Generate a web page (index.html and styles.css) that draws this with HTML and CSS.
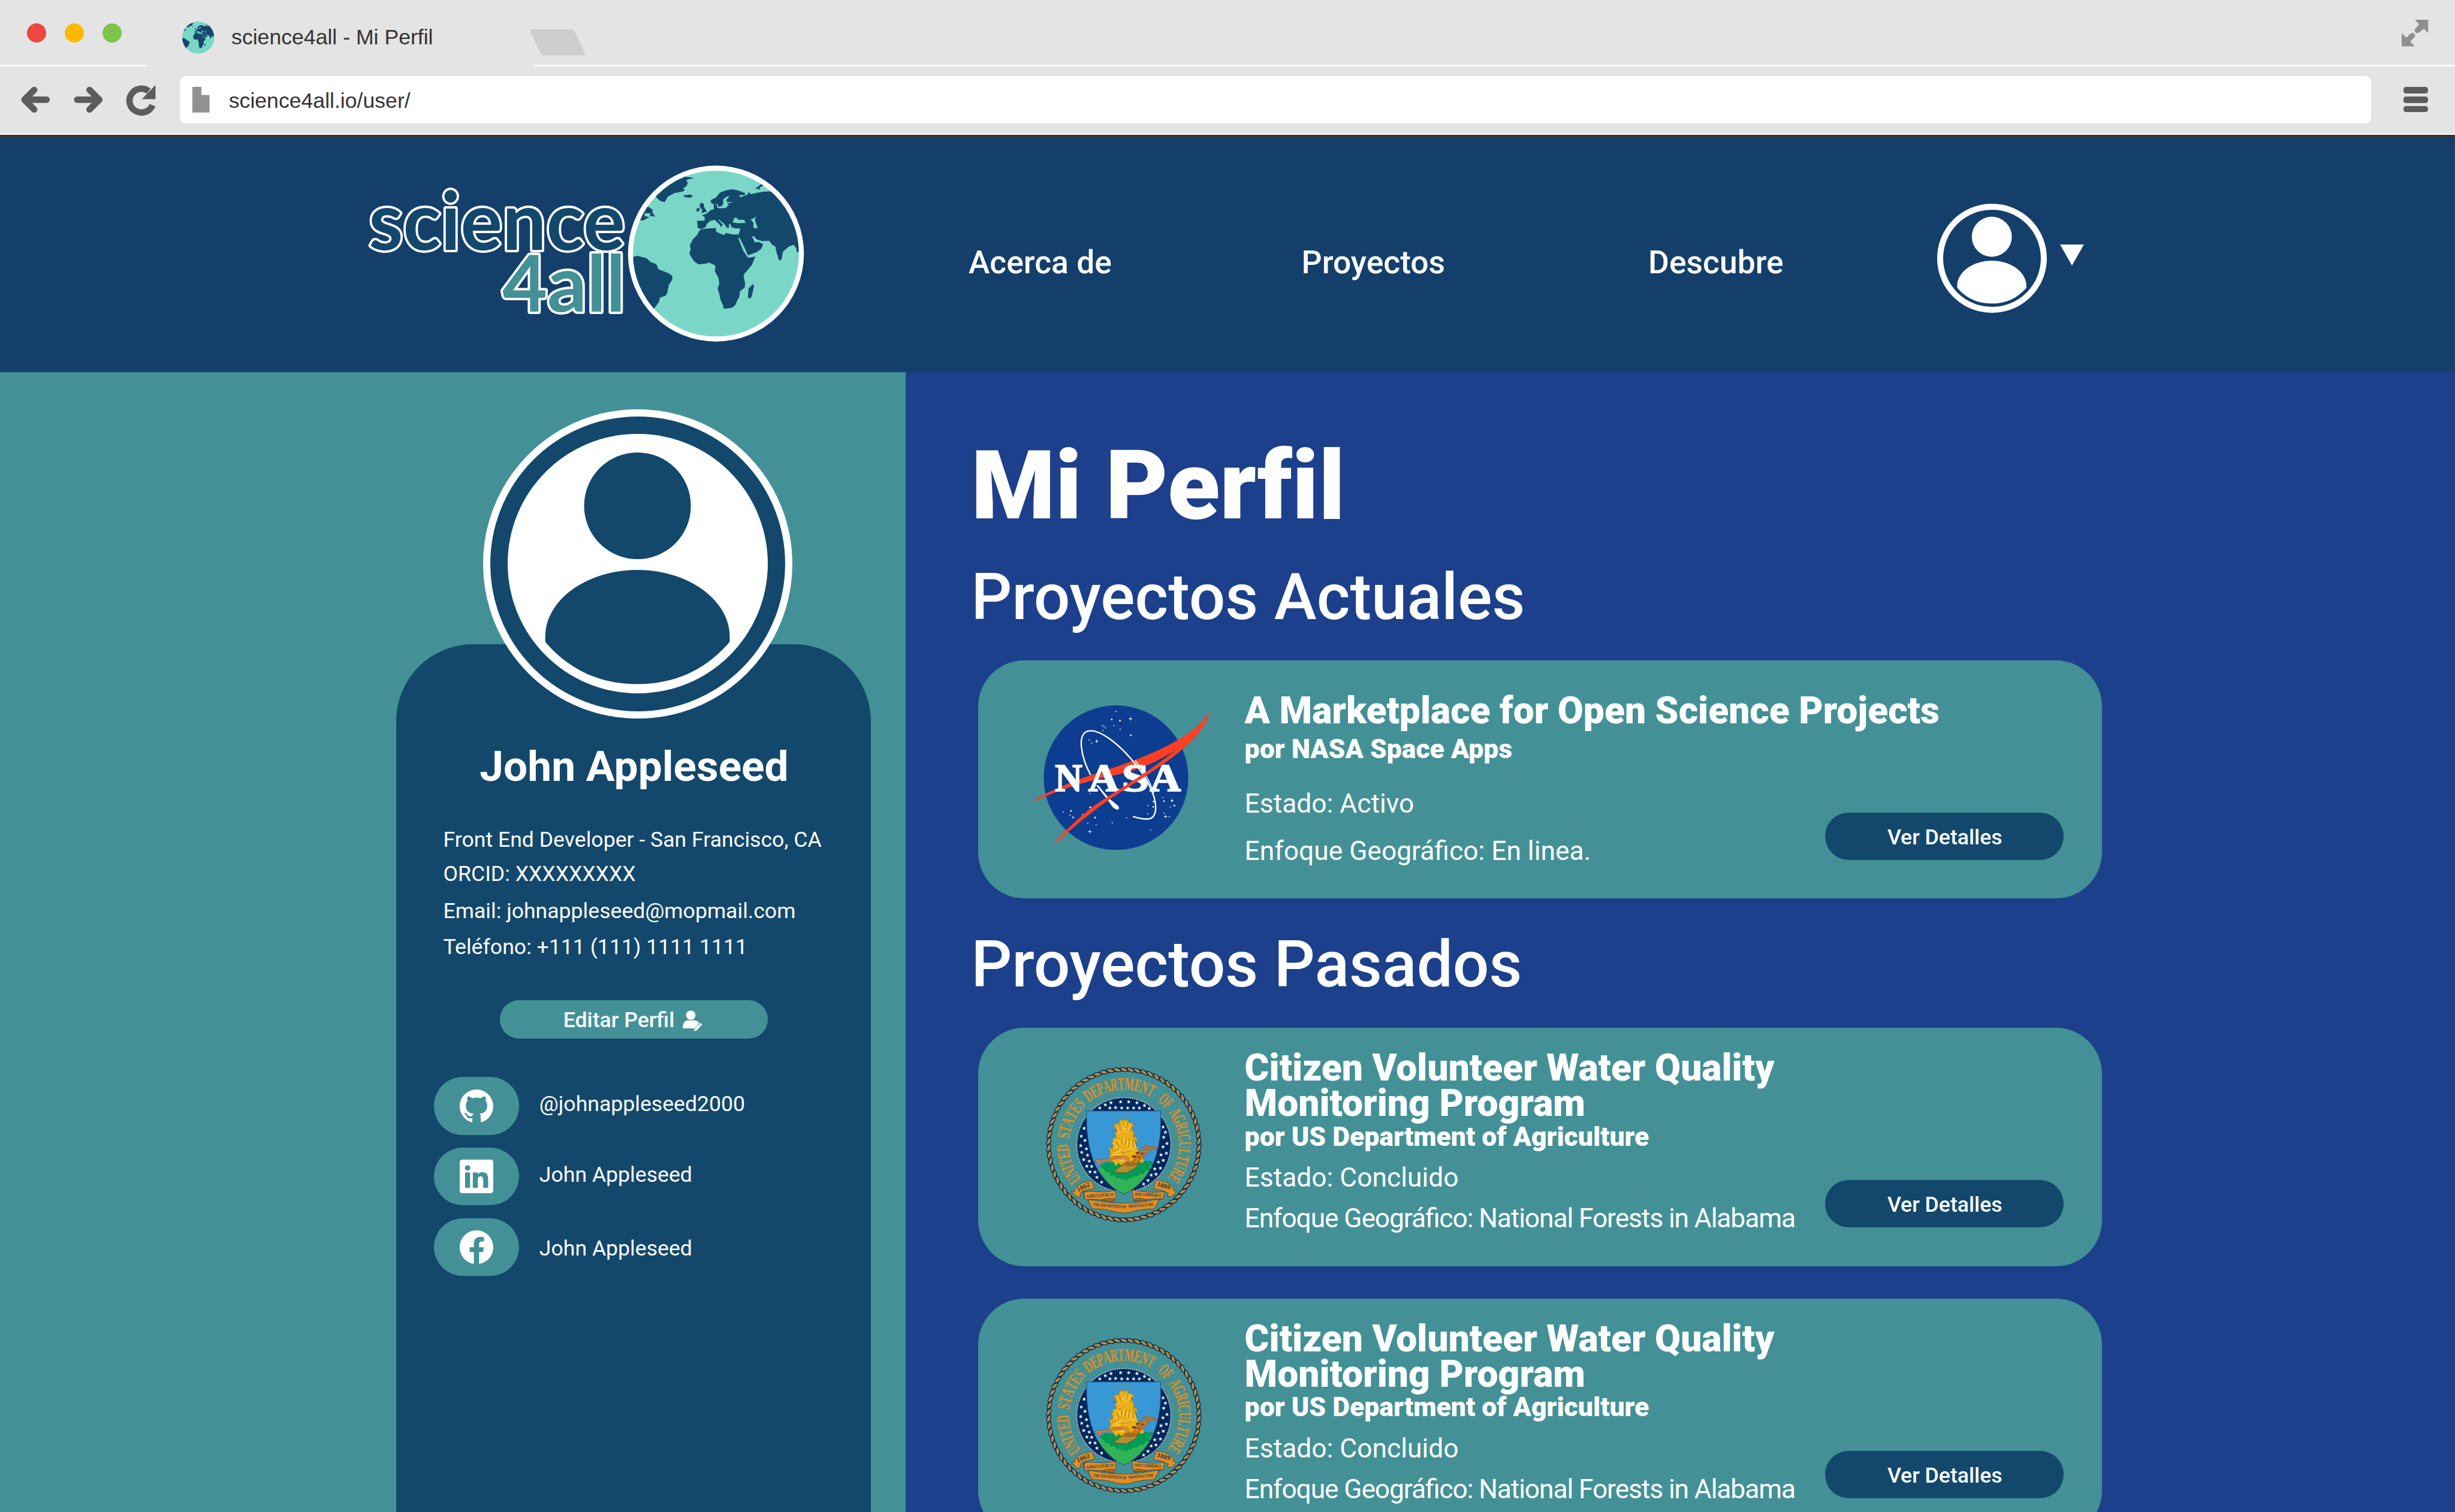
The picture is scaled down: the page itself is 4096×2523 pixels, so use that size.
FILE: index.html
```html
<!DOCTYPE html>
<html lang="es">
<head>
<meta charset="utf-8">
<title>science4all - Mi Perfil</title>
<link rel="stylesheet" href="styles.css">
</head>
<body>
<svg class="defs" aria-hidden="true">
  <defs>
    <clipPath id="globe-clip"><circle cx="648" cy="640" r="583"/></clipPath>
    <clipPath id="shield-clip"><path d="M375 395H894C901 560 886 660 835 780C790 870 715 950 636 978C560 950 480 865 435 775C385 660 370 540 375 395Z"/></clipPath>
  </defs>
  <symbol id="globe" viewBox="65 57 1166 1166">
    <circle cx="648" cy="640" r="583" fill="#7ad7c7"/>
    <g clip-path="url(#globe-clip)" fill="#13486c">
      <path d="M545 470L530 480L515 510L490 535L478 555L465 580L470 610L462 640L475 665L495 695L525 715L570 712L605 703L615 712L635 718L645 730L640 765L655 790L665 810L672 850L660 885L672 925L680 965L697 1000L703 1027L735 1025L765 1018L785 1000L800 965L812 945L817 905L850 880L853 850L842 800L850 780L880 745L900 720L925 660L875 670L860 650L840 620L805 535L805 505L770 507L718 495L705 510L680 500L650 487L648 460L600 463Z"/>
      <path d="M515 410L568 408L570 385L550 370L585 358L610 335L634 328L632 300L640 290L655 297L655 315L670 322L715 320L740 297L724 288L770 278L724 276L722 262L745 235L722 240L698 260L700 285L690 305L668 312L655 290L625 292L612 280L612 265L650 245L675 212L720 195L760 188L800 195L855 215L850 228L810 230L820 245L870 225L878 208L895 222L940 212L985 205L1035 203L1300 260L1240 628L1215 628L1212 600L1195 578L1160 590L1118 628L1112 670L1102 690L1090 685L1075 635L1065 590L1045 580L1022 550L975 552L935 540L915 517L902 520L922 562L950 558L980 575L965 608L935 630L872 652L850 600L815 530L800 535L808 505L820 465L770 460L755 450L748 430L738 435L742 455L728 462L705 430L660 395L672 412L697 438L690 445L685 458L678 440L652 415L640 403L610 410L585 430L575 455L548 468L520 460Z"/>
      <path d="M435 100L495 108L440 122L450 145L442 165L415 185L430 190L420 203L355 215L310 240L288 278L255 270L225 240L200 200L300 90Z"/>
      <path d="M415 232L450 228L470 225L485 237L465 248L435 245Z"/>
      <path d="M170 310L205 332L200 350L222 380L182 375L190 358L150 355L145 375L180 385L135 408L90 400L130 330Z"/>
      <path d="M535 290L550 283L565 295L562 310L585 345L545 355L552 335L535 310Z"/>
      <path d="M512 325L535 317L532 340L512 347Z"/>
      <path d="M50 668L95 655L160 672L190 700L228 713L245 750L315 778L342 797L340 825L318 860L305 920L295 935L255 950L248 980L215 1025L100 1030L0 700Z"/>
      <path d="M908 853L915 870L902 930L892 955L872 950L878 885Z"/>
      <path d="M925 182L970 150L980 160L952 180L962 192Z"/>
      <g fill="#7ad7c7">
        <path d="M765 420L778 388L800 390L800 403L845 403L858 425L800 427Z"/>
        <path d="M893 400L935 381L920 400L930 430L940 455L932 465L910 455L912 425Z"/>
      </g>
    </g>
  </symbol>
  <symbol id="person" viewBox="-304 -304 608 608">
    <circle cy="-135.5" r="125"/>
    <path d="M-216 171C-216 85 -119 14.500 0 14.500S216 85 216 171C216 182 217 183 211 189C155 251 85 282 0 282S-155 251 -211 189C-217 183 -216 182 -216 171Z"/>
  </symbol>
</svg>

<div class="tabstrip">
  <div class="lights"><i class="light red"></i><i class="light amber"></i><i class="light green"></i></div>
  <svg class="favicon"><use href="#globe"/></svg>
  <span class="tab-title">science4all - Mi Perfil</span>
  <svg class="new-tab" viewBox="0 0 128 61"><path fill="#cdcdcd" d="M4 0H95Q102 0 105 8L127 55Q129 61 123 61H34Q26 61 23 54L1 8Q-2 0 4 0Z"/></svg>
  <svg class="expand" viewBox="0 0 62 62"><path fill="#8f8f8f" d="M31 0H62V31L52 21L41 30Q36 33 32 29Q29 25 32 21L41 11ZM0 31L11 42L20 33Q25 29 30 33Q33 37 30 41L20 51L31 62H0Z"/></svg>
</div>
<div class="toolbar">
  <svg class="nav-icon back" viewBox="0 0 68 60"><path d="M60 30H12M31 7L8 30L31 53"/></svg>
  <svg class="nav-icon forward" viewBox="0 0 68 60"><path d="M8 30H56M37 7L60 30L37 53"/></svg>
  <svg class="nav-icon reload" viewBox="0 0 68 70"><path d="M61 47A28 28 0 1 1 52 14"/><path class="solid" d="M68 0V33H36Z"/></svg>
  <div class="address">
    <svg class="page-icon" viewBox="0 0 40 60"><path fill="#919191" d="M0 0H21V19H40V60H0Z"/></svg>
    <span>science4all.io/user/</span>
  </div>
  <div class="menu-icon"><i></i><i></i><i></i></div>
</div>

<header class="site-header">
  <svg class="logo" viewBox="850 350 1050 490">
    <g class="logo-text">
      <text x="863" y="584" font-size="188" fill="#13486c" textLength="600" lengthAdjust="spacingAndGlyphs">science</text>
      <text x="1176" y="729" font-size="182" fill="#439196" textLength="288" lengthAdjust="spacingAndGlyphs">4all</text>
    </g>
    <circle cx="1676" cy="593" r="206" fill="#fff"/>
    <use href="#globe" x="1481.700" y="398.700" width="388.600" height="388.600"/>
  </svg>
  <nav class="main-nav">
    <a>Acerca de</a><a>Proyectos</a><a>Descubre</a>
  </nav>
  <div class="user-menu">
    <svg class="user-avatar"><use href="#person"/></svg>
    <svg class="caret" viewBox="0 0 56 49"><path fill="#fff" d="M0 0H56L28 49Z"/></svg>
  </div>
</header>

<div class="page">
  <aside class="sidebar">
    <div class="portrait"><svg class="portrait-disc"><use href="#person"/></svg></div>
    <section class="profile">
      <h2 class="name">John Appleseed</h2>
      <ul class="facts">
        <li>Front End Developer - San Francisco, CA</li>
        <li>ORCID: XXXXXXXXX</li>
        <li>Email: johnappleseed@mopmail.com</li>
        <li>Teléfono: +111 (111) 1111 1111</li>
      </ul>
      <a class="edit">Editar Perfil
        <svg class="edit-icon" viewBox="177 83 138 148"><circle cx="234" cy="117" r="33"/><path d="M177 209C177 168 195 154 218 152Q234 158 252 152C272 153 285 160 292 170L262 209Z"/><path class="pencil" d="M254 232L257 212L300 168L316 183L273 227Z"/><path class="cut" d="M287 178L305 196M257 212L273 227"/></svg>
      </a>
      <ul class="social">
        <li><span class="pill"><svg viewBox="0 0 16 16"><path d="M8 0C3.58 0 0 3.58 0 8c0 3.54 2.29 6.53 5.47 7.59.4.07.55-.17.55-.38 0-.19-.01-.82-.01-1.49-2.01.37-2.53-.49-2.69-.94-.09-.23-.48-.94-.82-1.13-.28-.15-.68-.52-.01-.53.63-.01 1.08.58 1.23.82.72 1.21 1.87.87 2.33.66.07-.52.28-.87.51-1.07-1.78-.2-3.64-.89-3.64-3.95 0-.87.31-1.59.82-2.15-.08-.2-.36-1.02.08-2.12 0 0 .67-.21 2.2.82.64-.18 1.32-.27 2-.27s1.36.09 2 .27c1.53-1.04 2.2-.82 2.2-.82.44 1.1.16 1.92.08 2.12.51.56.82 1.27.82 2.15 0 3.07-1.87 3.75-3.65 3.95.29.25.54.73.54 1.48 0 1.07-.01 1.93-.01 2.2 0 .21.15.46.55.38A8.01 8.01 0 0 0 16 8c0-4.42-3.58-8-8-8"/></svg></span><span class="handle">@johnappleseed2000</span></li>
        <li><span class="pill"><svg viewBox="0 0 16 16"><path d="M0 1.146C0 .513.526 0 1.175 0h13.65C15.474 0 16 .513 16 1.146v13.708c0 .633-.526 1.146-1.175 1.146H1.175C.526 16 0 15.487 0 14.854zm4.943 12.248V6.169H2.542v7.225zm-1.2-8.212c.837 0 1.358-.554 1.358-1.248-.015-.709-.52-1.248-1.342-1.248S2.4 3.226 2.4 3.934c0 .694.521 1.248 1.327 1.248zm4.908 8.212V9.359c0-.216.016-.432.08-.586.173-.431.568-.878 1.232-.878.869 0 1.216.662 1.216 1.634v3.865h2.401V9.25c0-2.22-1.184-3.252-2.764-3.252-1.274 0-1.845.7-2.165 1.193v.025h-.016l.016-.025V6.169h-2.4c.03.678 0 7.225 0 7.225z"/></svg></span><span class="handle">John Appleseed</span></li>
        <li><span class="pill"><svg viewBox="0 0 16 16"><path d="M16 8.049c0-4.446-3.582-8.05-8-8.05C3.58 0-.002 3.603-.002 8.05c0 4.017 2.926 7.347 6.75 7.951v-5.625h-2.03V8.05H6.75V6.275c0-2.017 1.195-3.131 3.022-3.131.876 0 1.791.157 1.791.157v1.98h-1.009c-.993 0-1.303.621-1.303 1.258v1.51h2.218l-.354 2.326H9.25V16c3.824-.604 6.75-3.934 6.75-7.951"/></svg></span><span class="handle low">John Appleseed</span></li>
      </ul>
    </section>
  </aside>

  <main class="content">
    <h1>Mi Perfil</h1>
    <h2 class="section-title">Proyectos Actuales</h2>
    <article class="project roomy">
      <div class="emblem">
        <svg class="nasa" viewBox="0 0 1380 1200">
          <circle cx="640" cy="601" r="508" fill="#0c3d91"/>
          <path fill="#ff3f23" d="M65 758C200 680 330 625 600 538C850 455 1170 330 1303 140C1270 240 1190 330 1100 405L1055 412C900 500 800 550 600 590C400 635 230 690 75 765Z"/>
          <path fill="none" stroke="#fff" stroke-width="10" d="M462 582C400 470 350 271 462 271C610 271 920 620 919 810C917 895 880 910 758 873"/>
          <path fill="#fff" d="M498 652L515 655L590 745L655 798Q667 815 655 825Q635 828 615 805L572 745Z"/>
          <g class="nasa-letters">
            <text x="212" y="693" textLength="192" lengthAdjust="spacingAndGlyphs">N</text>
            <text x="445" y="693" textLength="216" lengthAdjust="spacingAndGlyphs">A</text>
            <text x="680" y="693" textLength="192" lengthAdjust="spacingAndGlyphs">S</text>
            <text x="878" y="693" textLength="218" lengthAdjust="spacingAndGlyphs">A</text>
          </g>
          <path fill="none" stroke="#fff" stroke-width="7" d="M775 480C840 560 890 650 905 710"/>
          <path fill="#ff3f23" d="M1303 140C1270 240 1190 330 1100 405C1040 460 960 515 840 595C700 685 560 770 440 870C360 935 280 1000 210 1065L210 1050C290 970 380 880 470 808C580 735 700 660 840 568C920 515 990 460 1055 412Z"/>
          <g id="nasa-stars" fill="#fff"></g>
        </svg>
      </div>
      <div class="details">
        <h3>A Marketplace for Open Science Projects</h3>
        <h4>por NASA Space Apps</h4>
        <p class="state">Estado: Activo</p>
        <p class="focus">Enfoque Geográfico: En linea.</p>
      </div>
      <a class="more">Ver Detalles</a>
    </article>

    <h2 class="section-title past">Proyectos Pasados</h2>
    <article class="project">
      <div class="emblem">
        <svg class="usda" viewBox="0 0 1260 1260">
          <g id="seal">
            <g id="seal-rope"></g>
            <g id="seal-letters" class="seal-letters"></g>
            <circle cx="636" cy="632" r="330" fill="#00285d"/>
            <g id="seal-stars" fill="#fff"></g>
            <g clip-path="url(#shield-clip)">
              <path fill="#3898d6" d="M370 390H900V980H370Z"/>
              <path fill="#30b457" d="M430 806L500 790L560 770H800L860 745V980H400Z"/>
              <path fill="#009b55" d="M470 790L500 755L640 765L790 745L845 752L835 775L812 790L822 808L790 815L775 835L745 838L735 855L700 856L690 872L665 870L655 890L640 872L620 880L610 862L585 868L570 846L540 850L535 826L505 825L500 806Z"/>
            </g>
            <path fill="none" stroke="#1b4a80" stroke-width="4" d="M375 395H894C901 560 886 660 835 780C790 870 715 950 636 978C560 950 480 865 435 775C385 660 370 540 375 395Z"/>
            <g stroke-linecap="round" stroke-linejoin="round">
              <path fill="none" stroke="#8d8a4a" stroke-width="3" stroke-dasharray="7 5" d="M612 470C605 440 600 430 585 425M622 465C622 430 610 412 618 404M635 465C640 430 630 415 655 404M648 465C655 430 670 415 690 412M655 468C670 445 685 435 700 440M610 475C595 460 590 450 583 462M690 480C715 490 722 510 728 535"/>
              <path fill="#ecb012" stroke="#8c6d16" stroke-width="2" d="M568 488L600 486L612 452L626 466L634 446L645 464L662 452L665 474L690 478L712 506L688 506L700 540L712 560L700 570L722 580L735 608L718 602L722 645L740 680L748 705L770 720L778 752L760 762L735 745L720 775L690 765L615 775L600 760L580 782L560 748L528 742L545 690L528 650L556 662L560 630L545 628L562 605L556 590L585 582L574 550L588 540L570 510Z"/>
              <path fill="none" stroke="#ffc55a" stroke-width="9" d="M590 510L602 550M625 490L630 520M650 485L645 530M612 580L650 560L668 535M600 600L615 635M640 590L630 635M665 600L655 640M690 610L680 650M708 625L722 655M575 690L620 665M640 680L700 662M560 705L610 700M685 500L670 520M580 640L590 660M610 745L640 735"/>
              <path fill="none" stroke="#7c5f12" stroke-width="3" d="M578 500L592 540M606 486L612 530M634 478L630 500M662 480L650 515M600 590L632 570L668 545M588 612L600 650M622 600L620 640M650 592L644 640M676 590L670 645M700 600L706 650M560 680L600 660M620 690L690 672M555 712L600 712M695 500L680 540M728 640L700 560M545 655L556 670M555 545L585 520"/>
              <path fill="none" stroke="#804312" stroke-width="17" d="M440 748C520 750 560 718 630 720M464 752L468 772M700 755L775 660Q795 632 815 650M722 762L808 672Q835 640 860 660M700 715L750 718M728 690L765 692"/>
              <path fill="none" stroke="#d5803c" stroke-width="13" d="M442 748C520 750 560 718 630 720M464 752L466 770"/>
              <path fill="none" stroke="#cf7620" stroke-width="12" d="M700 755L775 660Q795 632 815 650M722 762L808 672Q835 640 860 660M745 712L760 714M765 680L790 682"/>
              <path fill="#d98444" stroke="#804312" stroke-width="2" d="M610 716C650 700 678 720 680 755L658 756C654 732 640 728 610 732Z"/>
              <path fill="#b58a35" stroke="#6b4a15" stroke-width="3" d="M562 822L602 792L645 757Q715 745 732 784L700 805L655 830Z"/>
              <path fill="#a36c18" d="M645 758Q715 748 728 780Q680 790 625 776Z"/>
            </g>
            <g stroke="#1c3557" stroke-width="3" stroke-linejoin="round">
              <path fill="#b06c0e" d="M268 962L330 975L320 1003L285 975ZM1005 960L945 975L955 998L985 975ZM350 960L400 965L380 1015L358 1010ZM920 955L880 1020L915 1010Z"/>
              <path fill="#e58e1c" d="M290 940Q340 888 412 886L430 940Q365 945 335 968Q325 985 335 992L312 1004L268 962L292 958Z"/>
              <path fill="#e58e1c" d="M862 880Q940 885 984 935L982 952L1006 960L970 998L942 994L948 972Q900 945 846 942Z"/>
              <path fill="#e58e1c" d="M356 968Q380 955 430 962Q500 970 576 954L580 1005L560 1035Q470 1010 362 1018Z"/>
              <path fill="#e58e1c" d="M695 948Q800 975 920 962L915 1012Q800 1010 712 1030L700 1000Z"/>
              <path fill="#b06c0e" d="M383 1022L425 1030L415 1080ZM880 1022L850 1030L850 1080ZM480 1020Q530 1005 570 1010L560 1035ZM705 1028L720 1008Q770 1008 800 1022Z"/>
              <path fill="#e58e1c" d="M400 1018Q640 1070 868 1016L880 1026L850 1082Q740 1085 700 1102Q640 1122 560 1100Q500 1082 415 1082L385 1024Z"/>
            </g>
            <g class="seal-ribbon">
              <text font-size="44" textLength="96" lengthAdjust="spacingAndGlyphs" transform="translate(312 962) rotate(-24)">1862</text>
              <text font-size="44" textLength="96" lengthAdjust="spacingAndGlyphs" transform="translate(866 920) rotate(17)">1889</text>
              <text font-size="31" textLength="192" lengthAdjust="spacingAndGlyphs" transform="translate(371 1005) rotate(-4)">AGRICULTURE IS</text>
              <text font-size="31" textLength="188" lengthAdjust="spacingAndGlyphs" transform="translate(711 989) rotate(3)">AND COMMERCE</text>
              <text font-size="31" textLength="234" lengthAdjust="spacingAndGlyphs" transform="translate(421 1062) rotate(4.500)">THE FOUNDATION OF</text>
              <text font-size="31" textLength="176" lengthAdjust="spacingAndGlyphs" transform="translate(669 1076) rotate(-5)">MANUFACTURE</text>
            </g>
          </g>
        </svg>
      </div>
      <div class="details">
        <h3>Citizen Volunteer Water Quality<br>Monitoring Program</h3>
        <h4>por US Department of Agriculture</h4>
        <p class="state">Estado: Concluido</p>
        <p class="focus tight">Enfoque Geográfico: National Forests in Alabama</p>
      </div>
      <a class="more">Ver Detalles</a>
    </article>
    <article class="project">
      <div class="emblem"><svg class="usda" viewBox="0 0 1260 1260"><use href="#seal"/></svg></div>
      <div class="details">
        <h3>Citizen Volunteer Water Quality<br>Monitoring Program</h3>
        <h4>por US Department of Agriculture</h4>
        <p class="state">Estado: Concluido</p>
        <p class="focus tight">Enfoque Geográfico: National Forests in Alabama</p>
      </div>
      <a class="more">Ver Detalles</a>
    </article>
  </main>
</div>
<script src="emblems.js"></script>
</body>
</html>
```
FILE: styles.css
```css
/* the layout grid is 57.49rem wide, whatever the window */
html { font-size: calc(100vw / 57.49); }
* { box-sizing: border-box; }
body {
  margin: 0;
  height: 100vh;
  overflow: hidden;
  display: flex;
  flex-direction: column;
  font-family: Roboto, sans-serif;
  color: #fff;
}
h1, h2, h3, h4, p, ul { margin: 0; padding: 0; font-weight: 400; }
ul { list-style: none; }
svg { display: block; flex: none; overflow: visible; }
.defs { position: absolute; width: 0; height: 0; overflow: hidden; }

/* browser window */
.tabstrip, .toolbar {
  display: flex;
  flex: none;
  background: #e4e4e4;
  color: #353334;
  font: .5rem/.5rem "Liberation Sans", Arial, sans-serif;
}
.tabstrip { height: 1.52rem; }
.lights { display: flex; gap: .435rem; width: 2.22rem; margin: .55rem 0 0 .63rem; }
.light { width: .45rem; height: .45rem; border-radius: 50%; }
.red { background: #ee4640; }
.amber { background: #ffba00; }
.green { background: #7ec44a; }
.favicon { width: .75rem; height: .75rem; margin: .5rem 0 0 1.42rem; }
.tab-title { width: 7rem; margin: .63rem 0 0 .4rem; white-space: nowrap; }
.new-tab { width: 1.28rem; height: .61rem; margin-top: .69rem; }
.expand { width: .62rem; height: .62rem; margin: .47rem .63rem 0 auto; }

.toolbar {
  height: 1.7rem;
  padding-top: .26rem;
  border-bottom: .06rem solid #353334;
  background:
    linear-gradient(#fff, #fff) 0 0 / 3.45rem .04rem no-repeat,
    linear-gradient(#fff, #fff) 12.52rem 0 / 45rem .04rem no-repeat,
    linear-gradient(#fff, #fff) 0 1.61rem / 100% .03rem no-repeat,
    #e4e4e4;
}
.nav-icon { fill: none; stroke: #5c5c5c; stroke-width: 15; stroke-linecap: round; stroke-linejoin: round; }
.nav-icon .solid { fill: #5c5c5c; stroke: none; }
.back { width: .68rem; height: .6rem; margin: .26rem 0 0 .49rem; }
.forward { width: .68rem; height: .6rem; margin: .26rem 0 0 .56rem; }
.reload { width: .68rem; height: .7rem; margin: .21rem 0 0 .55rem; stroke-linecap: butt; }
.address {
  display: flex;
  width: 51.31rem;
  height: 1.105rem;
  margin-left: .57rem;
  padding: .26rem 0 0 .29rem;
  border-radius: .14rem;
  background: #fff;
}
.page-icon { width: .4rem; height: .6rem; }
.address span { margin-left: .46rem; padding-top: .075rem; }
.menu-icon { display: flex; flex-direction: column; gap: .07rem; margin: .26rem 0 0 .76rem; }
.menu-icon i { width: .58rem; height: .15rem; border-radius: .06rem; background: #5c5c5c; }

/* site header */
.site-header { display: flex; flex: none; height: 5.49rem; background: #153f6b; }
.logo { width: 10.5rem; height: 4.9rem; margin: .285rem 0 0 8.5rem; }
.logo-text {
  font-family: Lato, sans-serif;
  font-weight: 700;
  stroke: #fff;
  stroke-width: 11;
  stroke-linejoin: round;
  paint-order: stroke;
}
.main-nav {
  display: grid;
  grid-template-columns: 7.8rem 8.12rem 6.77rem;
  margin: 2.545rem 0 0 3.68rem;
  font-size: .75rem;
  line-height: .75rem;
  font-weight: 500;
}
.user-menu { display: flex; margin-top: 1.55rem; gap: .31rem; }
.user-avatar {
  width: 2.56rem;
  height: 2.56rem;
  border: .152rem solid #fff;
  border-radius: 50%;
  fill: #fff;
}
.caret { width: .56rem; height: .49rem; margin-top: .96rem; }

/* page columns */
.page { display: flex; flex: 1; min-height: 0; }
.sidebar {
  display: flex;
  flex-direction: column;
  width: 21.21rem;
  padding: .87rem 0 0 9.28rem;
  background: #439196;
}
.portrait {
  z-index: 1;
  flex: none;
  display: grid;
  place-items: center;
  width: 7.25rem;
  height: 7.25rem;
  margin-left: 2.03rem;
  border: .18rem solid #fff;
  border-radius: 50%;
  background: #13486c;
}
.portrait-disc { width: 6.08rem; height: 6.08rem; border-radius: 50%; background: #fff; fill: #13486c; }
.profile {
  display: flex;
  flex-direction: column;
  flex: 1 0 auto;
  width: 11.12rem;
  margin-top: -1.745rem;
  padding-top: 2.355rem;
  border-radius: 1.8rem 1.8rem 0 0;
  background: #13486c;
}
.name { padding-left: .02rem; font-size: 1rem; line-height: 1rem; font-weight: 700; text-align: center; }
.facts { padding: .985rem 0 0 1.1rem; font-size: .5rem; line-height: .5rem; white-space: nowrap; }
.facts li:nth-child(2) { margin-top: .3rem; }
.facts li:nth-child(3) { margin-top: .375rem; }
.facts li:nth-child(4) { margin-top: .34rem; }
.edit {
  display: flex;
  align-items: center;
  gap: .19rem;
  width: 6.28rem;
  height: .9rem;
  margin: .99rem 0 0 2.42rem;
  padding: .05rem 0 0 1.49rem;
  border-radius: .45rem;
  background: #439196;
  font-size: .5rem;
  line-height: .5rem;
  font-weight: 500;
}
.edit-icon { width: .46rem; height: .493rem; fill: #fff; }
.pencil { stroke: #439196; stroke-width: 4; }
.cut { stroke: #439196; stroke-width: 3; }
.social { display: grid; gap: .3rem; padding: .9rem 0 0 .88rem; font-size: .5rem; line-height: .5rem; }
.social li { display: flex; align-items: center; gap: .47rem; height: 1.35rem; }
.pill { display: grid; place-items: center; width: 2rem; height: 1.35rem; border-radius: .675rem; background: #439196; }
.pill svg { width: .786rem; height: .786rem; fill: #fff; }
.handle { padding-bottom: .07rem; }
.handle.low { padding: .09rem 0 0; }

.content { flex: 1; padding: 1.535rem 0 0 1.53rem; background: #1d408c; overflow: hidden; }
h1 { font-size: 2.25rem; line-height: 2.26rem; font-weight: 900; font-variant-ligatures: none; }
.section-title { margin-top: .74rem; font-size: 1.5rem; line-height: 1.5rem; font-weight: 500; }
.section-title.past { margin-top: .807rem; }
.project {
  display: flex;
  width: 26.31rem;
  height: 5.58rem;
  margin: .72rem 0 0 .172rem;
  border-radius: 1.08rem;
  background: #439196;
}
.project + .project { margin-top: .76rem; }
.emblem { flex: none; width: 6.235rem; }
.nasa { width: 4.6rem; height: 4rem; margin: .74rem 0 0 1.09rem; }
.usda { width: 4.2rem; height: 4.2rem; margin: .63rem 0 0 1.29rem; }
.details { flex: 1; width: 0; padding-top: .54rem; font-size: .6225rem; line-height: .6rem; white-space: nowrap; }
.details h3 { font-size: .875rem; line-height: .822rem; font-weight: 900; }
.details h4 { margin-top: .07rem; font-size: .625rem; font-weight: 900; line-height: .6rem; }
.state { margin-top: .36rem; }
.focus { margin-top: .358rem; }
.tight { letter-spacing: -.0155rem; font-feature-settings: "liga" 1; }
.roomy .details { padding-top: .775rem; }
.roomy h4 { margin-top: .182rem; }
.roomy .state { margin-top: .68rem; }
.roomy .focus { margin-top: .506rem; }
.more {
  flex: none;
  display: grid;
  place-items: center;
  align-self: flex-end;
  width: 5.59rem;
  height: 1.11rem;
  margin: 0 .9rem .905rem 0;
  padding: .06rem 0 0 .03rem;
  border-radius: .55rem;
  background: #13486c;
  font-size: .5rem;
  line-height: .5rem;
  font-weight: 500;
}

/* emblem lettering */
.nasa-letters { font: 700 280px "Liberation Serif", serif; fill: #fff; stroke: #fff; stroke-width: 9; }
.seal-letters { font: 700 125px "Liberation Serif", serif; fill: #e58e1c; text-anchor: middle; }
.seal-ribbon { font-family: "Liberation Serif", serif; font-weight: 700; fill: #1c3557; }
```
FILE: emblems.js
```js
const NS = "http://www.w3.org/2000/svg";
function add(parent, tag, attrs, text) {
  const el = document.createElementNS(NS, tag);
  for (const k in attrs) el.setAttribute(k, attrs[k]);
  if (text) el.textContent = text;
  parent.appendChild(el);
}
const CX = 636, CY = 632;

// twisted rope border
const rope = document.getElementById("seal-rope");
add(rope, "circle", { cx: CX, cy: CY, r: 528, fill: "none", stroke: "#00285d", "stroke-width": 26 });
const strands = 70;
for (const pass of [["#00285d", 30, 15], ["#b98a38", 24, 9.5]]) {
  for (let i = 0; i < strands; i++) {
    add(rope, "ellipse", {
      rx: pass[1], ry: pass[2], fill: pass[0],
      transform: `translate(${CX} ${CY}) rotate(${i * 360 / strands}) translate(0 -528) rotate(22)`
    });
  }
}

// circular lettering: [word, start angle, end angle], measured clockwise from nine o'clock
const advance = { U: 722, N: 722, I: 389, T: 667, E: 667, D: 722, S: 556, A: 722, P: 611, R: 722, M: 944, O: 778, F: 611, G: 778, C: 722, L: 667 };
const letters = document.getElementById("seal-letters");
for (const [word, from, to] of [["UNITED", -38.5, 0.5], ["STATES", 6, 46], ["DEPARTMENT", 50.5, 120], ["OF", 127.5, 140], ["AGRICULTURE", 144.5, 217]]) {
  const total = [...word].reduce((s, c) => s + advance[c], 0);
  const squeeze = (to - from) * Math.PI / 180 * 415 / (total * 0.125);
  let pos = 0;
  for (const c of word) {
    const angle = from + (to - from) * (pos + advance[c] / 2) / total - 90;
    add(letters, "text", {
      transform: `translate(${CX} ${CY}) rotate(${angle.toFixed(2)}) translate(0 -386) scale(${squeeze.toFixed(3)} 1)`
    }, c);
    pos += advance[c];
  }
}

// beads and stars on the inner disc
const stars = document.getElementById("seal-stars");
for (let i = 0; i < 136; i++) {
  const a = i * Math.PI * 2 / 136;
  add(stars, "circle", { cx: (CX + 331 * Math.cos(a)).toFixed(1), cy: (CY + 331 * Math.sin(a)).toFixed(1), r: 4.8, stroke: "#00285d", "stroke-width": 1.5 });
}
const starPath = Array.from({ length: 10 }, (_, k) => {
  const r = k % 2 ? 6 : 15, a = -Math.PI / 2 + k * Math.PI / 5;
  return (r * Math.cos(a)).toFixed(1) + "," + (r * Math.sin(a)).toFixed(1);
}).join(" ");
[[546,337],[506,352],[467,374],[538,374],[578,371],[613,331],[621,374],[663,374],[670,331],[705,374],[745,374],[728,337],[781,357],[815,377],
 [357,517],[337,572],[363,602],[333,639],[373,661],[340,686],[381,706],[354,737],[393,748],[376,783],[410,785],[398,823],[434,825],[447,861],[480,895],
 [912,508],[928,545],[916,580],[939,624],[911,648],[935,692],[897,703],[913,742],[879,754],[893,797],[853,802],[862,839],[828,846],[806,883],[775,909]]
  .forEach(([x, y]) => add(stars, "polygon", { points: starPath, transform: `translate(${x} ${y})` }));

// night sky of the NASA emblem
const sky = document.getElementById("nasa-stars");
[[641,136,4],[610,192,6],[668,200,6],[625,236,4],[669,259,4],[544,234,4],[555,242,4],[567,251,4],[548,268,4],[744,303,6],[451,336,4],[469,358,4],
 [458,711,4],[459,809,6],[268,841,4],[324,834,6],[317,863,4],[339,880,6],[405,860,4],[493,881,6],[442,920,4],[500,931,4],[614,918,4],[714,882,4],
 [883,968,4],[903,769,6],[864,797,4],[902,806,6],[863,855,4],[968,741,4],[977,766,6],[1050,797,6],[1022,806,4],[978,849,4],[1016,874,4]]
  .forEach(([cx, cy, r]) => add(sky, "circle", { cx, cy, r }));
[[742,187],[504,345],[1033,762],[988,874],[456,980]].forEach(([x, y]) => {
  add(sky, "circle", { cx: x, cy: y, r: 6 });
  add(sky, "path", { d: `M${x - 19} ${y}L${x} ${y - 2}L${x + 19} ${y}L${x} ${y + 2}ZM${x} ${y - 19}L${x + 2} ${y}L${x} ${y + 19}L${x - 2} ${y}Z` });
});
```
